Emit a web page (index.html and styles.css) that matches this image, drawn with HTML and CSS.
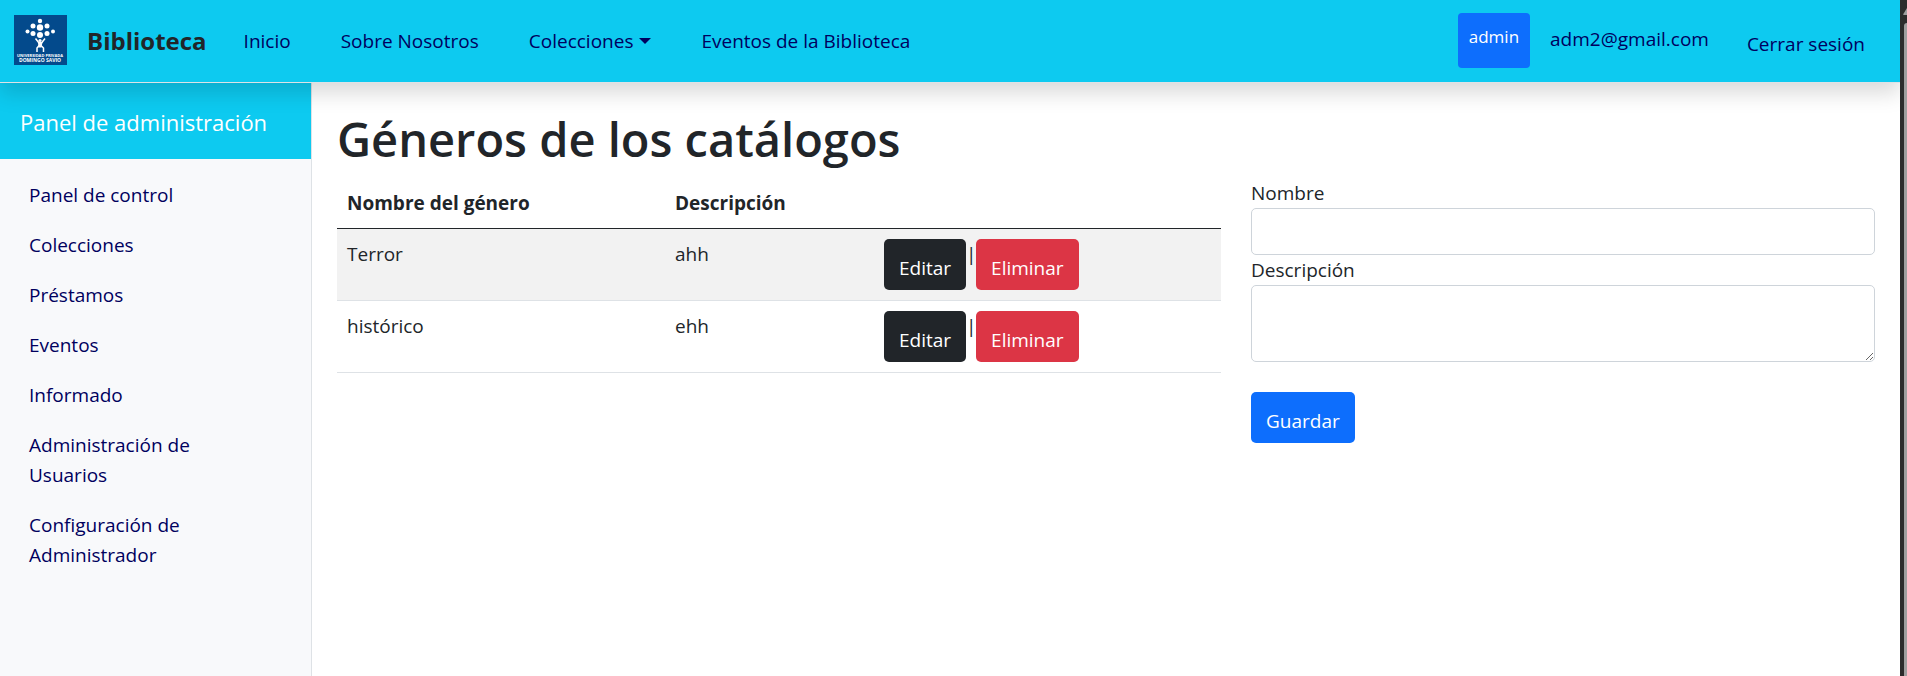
FILE: index.html
```html
<!DOCTYPE html>
<html lang="es">
<head>
<meta charset="utf-8">
<meta name="viewport" content="width=device-width, initial-scale=1">
<title>Géneros de los catálogos - Biblioteca</title>
<link rel="stylesheet" href="styles.css">
</head>
<body>
<div class="page">
  <header class="navbar">
    <a class="logo" href="#" aria-label="Universidad Privada Domingo Savio">
      <svg class="logo-image" viewBox="0 0 53 50" aria-hidden="true">
        <rect width="53" height="50" fill="#034a8c"/>
        <g fill="#fff">
          <circle cx="26" cy="6" r="2.2"/>
          <circle cx="19" cy="11" r="2.5"/><circle cx="33" cy="11" r="2.5"/>
          <circle cx="26" cy="12.500" r="3.200"/>
          <circle cx="13.500" cy="16.500" r="2"/><circle cx="39" cy="16.500" r="2"/>
          <circle cx="19" cy="18.500" r="2.500"/><circle cx="33" cy="18.500" r="2.500"/>
          <circle cx="26" cy="20" r="3"/>
          <circle cx="26" cy="25.500" r="1.600"/>
        </g>
        <path d="M21.500 23.500l3.500 4.500h2.500l3.500-4.500M25.500 30l-2.500 3v4M26.500 30l3 3v4" fill="none" stroke="#fff" stroke-width="1.500"/>
        <path d="M24 27h4.500l-1 5.500h-3z" fill="#fff"/>
        <text class="logo-small" x="26" y="41.500" text-anchor="middle">UNIVERSIDAD PRIVADA</text>
        <text class="logo-large" x="26" y="47" text-anchor="middle">DOMINGO SAVIO</text>
      </svg>
    </a>
    <a class="brand" href="#">Biblioteca</a>
    <nav class="nav">
      <a href="#">Inicio</a>
      <a href="#">Sobre Nosotros</a>
      <a class="dropdown" href="#">Colecciones</a>
      <a href="#">Eventos de la Biblioteca</a>
    </nav>
    <div class="account">
      <span class="role">admin</span>
      <a class="email" href="#">adm2@gmail.com</a>
      <a class="logout" href="#">Cerrar sesión</a>
    </div>
  </header>
  <div class="layout">
    <aside class="sidebar">
      <div class="sidebar-title">Panel de administración</div>
      <nav class="sidebar-nav">
        <a href="#">Panel de control</a>
        <a href="#">Colecciones</a>
        <a href="#">Préstamos</a>
        <a href="#">Eventos</a>
        <a href="#">Informado</a>
        <a href="#">Administración de Usuarios</a>
        <a href="#">Configuración de Administrador</a>
      </nav>
    </aside>
    <main class="content">
      <h1>Géneros de los catálogos</h1>
      <div class="columns">
        <table class="table">
          <thead>
            <tr><th class="col-name" scope="col">Nombre del género</th><th class="col-text" scope="col">Descripción</th><td></td></tr>
          </thead>
          <tbody>
            <tr>
              <td>Terror</td><td>ahh</td>
              <td><div class="actions"><button class="btn dark" type="button">Editar</button><span class="separator">|</span><button class="btn danger" type="button">Eliminar</button></div></td>
            </tr>
            <tr>
              <td>histórico</td><td>ehh</td>
              <td><div class="actions"><button class="btn dark" type="button">Editar</button><span class="separator">|</span><button class="btn danger" type="button">Eliminar</button></div></td>
            </tr>
          </tbody>
        </table>
        <form class="form">
          <label for="nombre">Nombre</label>
          <input id="nombre" type="text">
          <label for="descripcion">Descripción</label>
          <textarea id="descripcion"></textarea>
          <button class="btn primary" type="button">Guardar</button>
        </form>
      </div>
    </main>
  </div>
</div>
<div class="scrollbar" aria-hidden="true">
  <svg class="scroll-arrow" viewBox="0 0 4 7"><path d="M0 6.500L4 0v7H1z" fill="#9f9f9f"/></svg>
  <div class="scroll-thumb"></div>
</div>
</body>
</html>
```
FILE: styles.css
```css
* { box-sizing: border-box; }

body {
  display: flex;
  min-height: 100vh;
  margin: 0;
  background: #fff;
  color: #212529;
  font: 19px/30px "Open Sans", "Noto Sans", sans-serif;
}

a { color: #00005e; text-decoration: none; }
button, input, textarea { font: inherit; }

.page {
  display: flex;
  flex: 1;
  flex-direction: column;
  min-width: 0;
  overflow: hidden;
}

.navbar {
  position: relative;
  z-index: 1;
  display: flex;
  align-items: center;
  height: 83px;
  padding: 0 35px 2px 14px;
  background: #0dcaf0;
  border-bottom: 1px solid #dee2e6;
  box-shadow: 0 10px 20px rgba(0, 0, 0, 0.15);
}

.logo { display: flex; }
.logo-image { width: 53px; height: 50px; }
.logo-small, .logo-large { fill: #fff; font-family: "Open Sans", sans-serif; font-weight: 700; }
.logo-small { font-size: 4px; }
.logo-large { font-size: 5px; }

.brand { margin-left: 20px; padding-top: 2px; color: #212529; font-size: 24px; font-weight: 700; }

.nav { display: flex; gap: 50px; margin-left: 37px; padding-top: 2px; white-space: nowrap; }

.dropdown { display: flex; align-items: center; gap: 6px; }
.dropdown::after {
  content: "";
  border: 6px solid transparent;
  border-top-color: currentColor;
  border-bottom: 0;
}

.account { display: flex; align-items: flex-start; margin-left: auto; }
.role {
  height: 55px;
  padding: 9px 11px;
  border-radius: 4px;
  background: #0d6efd;
  color: #fff;
  font-size: 17px;
}
.email { margin-left: 20px; padding-top: 11px; }
.logout { margin-left: 38px; padding-top: 16px; }

.layout { display: flex; flex: 1; }

.sidebar {
  flex: 0 0 312px;
  border-right: 1px solid #dee2e6;
  background: #f8f9fb;
}
.sidebar-title {
  padding: 20px 20px 18px;
  background: #0dcaf0;
  color: #fff;
  font-size: 22px;
  line-height: 38px;
  white-space: nowrap;
}
.sidebar-nav { display: flex; flex-direction: column; padding: 11px 80px 0 29px; }
.sidebar-nav a { padding: 10px 0; }

.content { flex: 1; min-width: 0; padding: 26px 25px; }

h1 { margin: 0 0 9px; font-size: 47px; font-weight: 600; line-height: 60px; }

.columns { display: grid; grid-template-columns: 17fr 12fr; gap: 30px; align-items: start; }

.table { width: 100%; border-collapse: collapse; table-layout: fixed; }
.table th, .table td {
  padding: 10px;
  border-bottom: 1px solid #dee2e6;
  text-align: left;
  vertical-align: top;
}
.table thead th, .table thead td { border-bottom-color: #212529; }
.table tbody tr:nth-child(odd) { background: #f2f2f2; }
.col-name { width: 328px; }
.col-text { width: 209px; }

.actions { display: flex; }
.separator { width: 10px; }

.btn {
  height: 51px;
  padding: 14px 15px 7px;
  border: 0;
  border-radius: 5px;
  color: #fff;
}
.dark { background: #212529; }
.danger { background: #dc3545; }
.primary { background: #0d6efd; }

.form { display: flex; flex-direction: column; align-items: flex-start; }
.form input, .form textarea {
  width: 100%;
  border: 1px solid #ced4da;
  border-radius: 5px;
  background: #fff;
  padding: 7px 15px;
}
.form input { height: 47px; }
.form textarea { height: 77px; margin-bottom: 30px; }

.scrollbar { flex: 0 0 7px; display: flex; flex-direction: column; align-items: flex-end; padding-top: 8px; background: #2c2c2c; }
.scroll-arrow { width: 4px; height: 7px; }
.scroll-thumb { flex: 1; width: 3px; margin-top: 8px; border-top-left-radius: 3px; background: #9f9f9f; }
```
